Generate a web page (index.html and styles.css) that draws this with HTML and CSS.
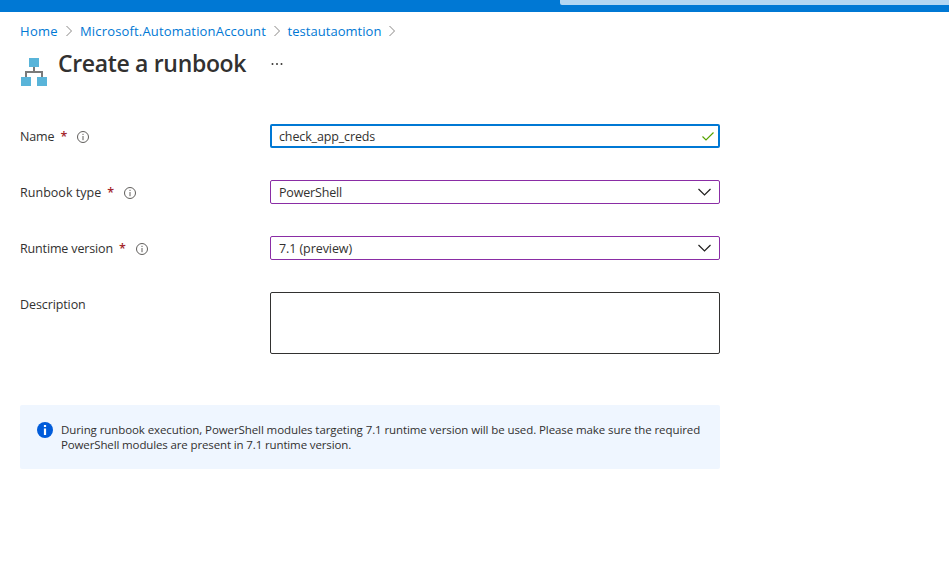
FILE: index.html
```html
<!DOCTYPE html>
<html lang="en">
<head>
<meta charset="utf-8">
<title>Create a runbook</title>
<link rel="stylesheet" href="styles.css">
</head>
<body>
<header class="topbar"><div class="search"></div></header>
<main class="page">
  <nav class="crumbs">
    <a class="crumb home">Home</a>
    <svg class="sep" viewBox="0 0 8 12"><path d="M1.5 1l5 5-5 5"/></svg>
    <a class="crumb account">Microsoft.AutomationAccount</a>
    <svg class="sep" viewBox="0 0 8 12"><path d="M1.5 1l5 5-5 5"/></svg>
    <a class="crumb resource">testautaomtion</a>
    <svg class="sep" viewBox="0 0 8 12"><path d="M1.5 1l5 5-5 5"/></svg>
  </nav>
  <div class="heading">
    <svg class="logo" viewBox="0 0 26 28">
      <path d="M13 9v5M5 20v-6h16v6" fill="none" stroke="#7a7a7a" stroke-width="2"/>
      <path d="M8 0h10v9H8zM0 19h10v9H0zM16 19h10v9H16z" fill="#59b4d9"/>
    </svg>
    <h1 class="title">Create a runbook</h1>
    <svg class="more" viewBox="0 0 12 2"><path d="M.7 0h1.6v2H.7zM5.2 0h1.6v2H5.2zM9.7 0h1.6v2H9.7z"/></svg>
  </div>
  <form class="form">
    <div class="row">
      <div class="label"><span class="l-name">Name</span><span class="star">*</span><svg class="info" viewBox="0 0 12 12"><circle cx="6" cy="6" r="5.5"/><path d="M6 5v4.2M6 2.8v1.2"/></svg></div>
      <div class="field active"><span class="v-name">check_app_creds</span><svg class="check" viewBox="0 0 12 9"><path d="M.5 4.5l3.5 3.5L11.5.5"/></svg></div>
    </div>
    <div class="row">
      <div class="label"><span class="l-type">Runbook type</span><span class="star">*</span><svg class="info" viewBox="0 0 12 12"><circle cx="6" cy="6" r="5.5"/><path d="M6 5v4.2M6 2.8v1.2"/></svg></div>
      <div class="field select"><span class="v-type">PowerShell</span><svg class="chevron" viewBox="0 0 13 8"><path d="M.5 1l6 6 6-6"/></svg></div>
    </div>
    <div class="row">
      <div class="label"><span class="l-version">Runtime version</span><span class="star">*</span><svg class="info" viewBox="0 0 12 12"><circle cx="6" cy="6" r="5.5"/><path d="M6 5v4.2M6 2.8v1.2"/></svg></div>
      <div class="field select"><span class="v-version">7.1 (preview)</span><svg class="chevron" viewBox="0 0 13 8"><path d="M.5 1l6 6 6-6"/></svg></div>
    </div>
    <div class="row">
      <div class="label"><span class="l-desc">Description</span></div>
      <div class="field area"></div>
    </div>
  </form>
  <aside class="notice">
    <svg class="notice-icon" viewBox="0 0 16 16"><circle cx="8" cy="8" r="8" fill="#015cda"/><path d="M6.9 6.5h2.2V13H6.9zM6.9 3h2.2v2.1H6.9z" fill="#fff"/></svg>
    <p class="notice-text"><span class="line1">During runbook execution, PowerShell modules targeting 7.1 runtime version will be used. Please make sure the required</span><br><span class="line2">PowerShell modules are present in 7.1 runtime version.</span></p>
  </aside>
</main>
</body>
</html>
```
FILE: styles.css
```css
* { box-sizing: border-box; }
body { margin: 0; background: #fff; color: #323130; font: 12.5px/18px "Open Sans", "Noto Sans", sans-serif; }
.topbar { height: 12px; background: #0078d4; }
.search { height: 5px; margin-left: 560px; background: #b3d6f2; border-bottom-left-radius: 2px; }
.page { padding: 0 20px; }
.crumbs { display: flex; align-items: center; height: 18px; margin-top: 10px; }
.crumb { color: #0078d4; font-size: 13px; white-space: nowrap; }
.home { letter-spacing: .3px; }
.account { letter-spacing: .17px; }
.resource { letter-spacing: .04px; }
.sep { width: 8px; height: 12px; margin: 0 7px; fill: none; stroke: #8a8886; }
.account + .sep, .resource + .sep { margin-left: 6.5px; }
.heading { display: flex; height: 46px; margin-top: 6px; }
.logo { width: 26px; height: 28px; margin: 12px 11px 0 1px; }
.title { margin: 0; font-size: 23px; line-height: 35px; font-weight: 600; letter-spacing: -.33px; white-space: nowrap; }
.more { width: 12px; height: 2px; margin: 17px 0 0 25px; fill: #484644; }
.form { margin-top: 32px; }
.row { display: flex; align-items: flex-start; margin-bottom: 32px; }
.label { display: flex; align-items: center; width: 250px; height: 24px; white-space: nowrap; }
.label span, .field span { padding-top: 2px; }
.l-name { letter-spacing: -.12px; }
.l-type { letter-spacing: .03px; }
.l-version { letter-spacing: -.15px; }
.l-desc { letter-spacing: -.1px; }
.v-name { letter-spacing: -.13px; }
.v-type { letter-spacing: -.17px; }
.v-version { letter-spacing: -.08px; }
.star { margin-left: 6px; color: #a4262c; font-weight: 600; }
.info { width: 12px; height: 12px; margin: 1px 0 0 10px; fill: none; stroke: #605e5c; }
.field { display: flex; align-items: center; justify-content: space-between; width: 450px; height: 24px; border: 1px solid #8a2da5; border-radius: 2px; padding: 0 8px; white-space: nowrap; }
.active { border: 2px solid #0078d4; padding: 0 4px 0 7px; }
.check { width: 12px; height: 9px; fill: none; stroke: #57a300; stroke-width: 1.2; }
.chevron { width: 13px; height: 8px; fill: none; stroke: #201f1e; stroke-width: 1.2; }
.area { height: 62px; border-color: #323130; }
.notice { display: flex; width: 700px; height: 64px; margin-top: 51px; padding: 17px; border-radius: 2px; background: #eff6ff; }
.notice-icon { flex: none; width: 16px; height: 16px; }
.notice-text { margin: 0 0 0 8px; font-size: 11.5px; line-height: 15px; white-space: nowrap; }
.line1 { letter-spacing: -.09px; }
.line2 { letter-spacing: -.13px; }
```
